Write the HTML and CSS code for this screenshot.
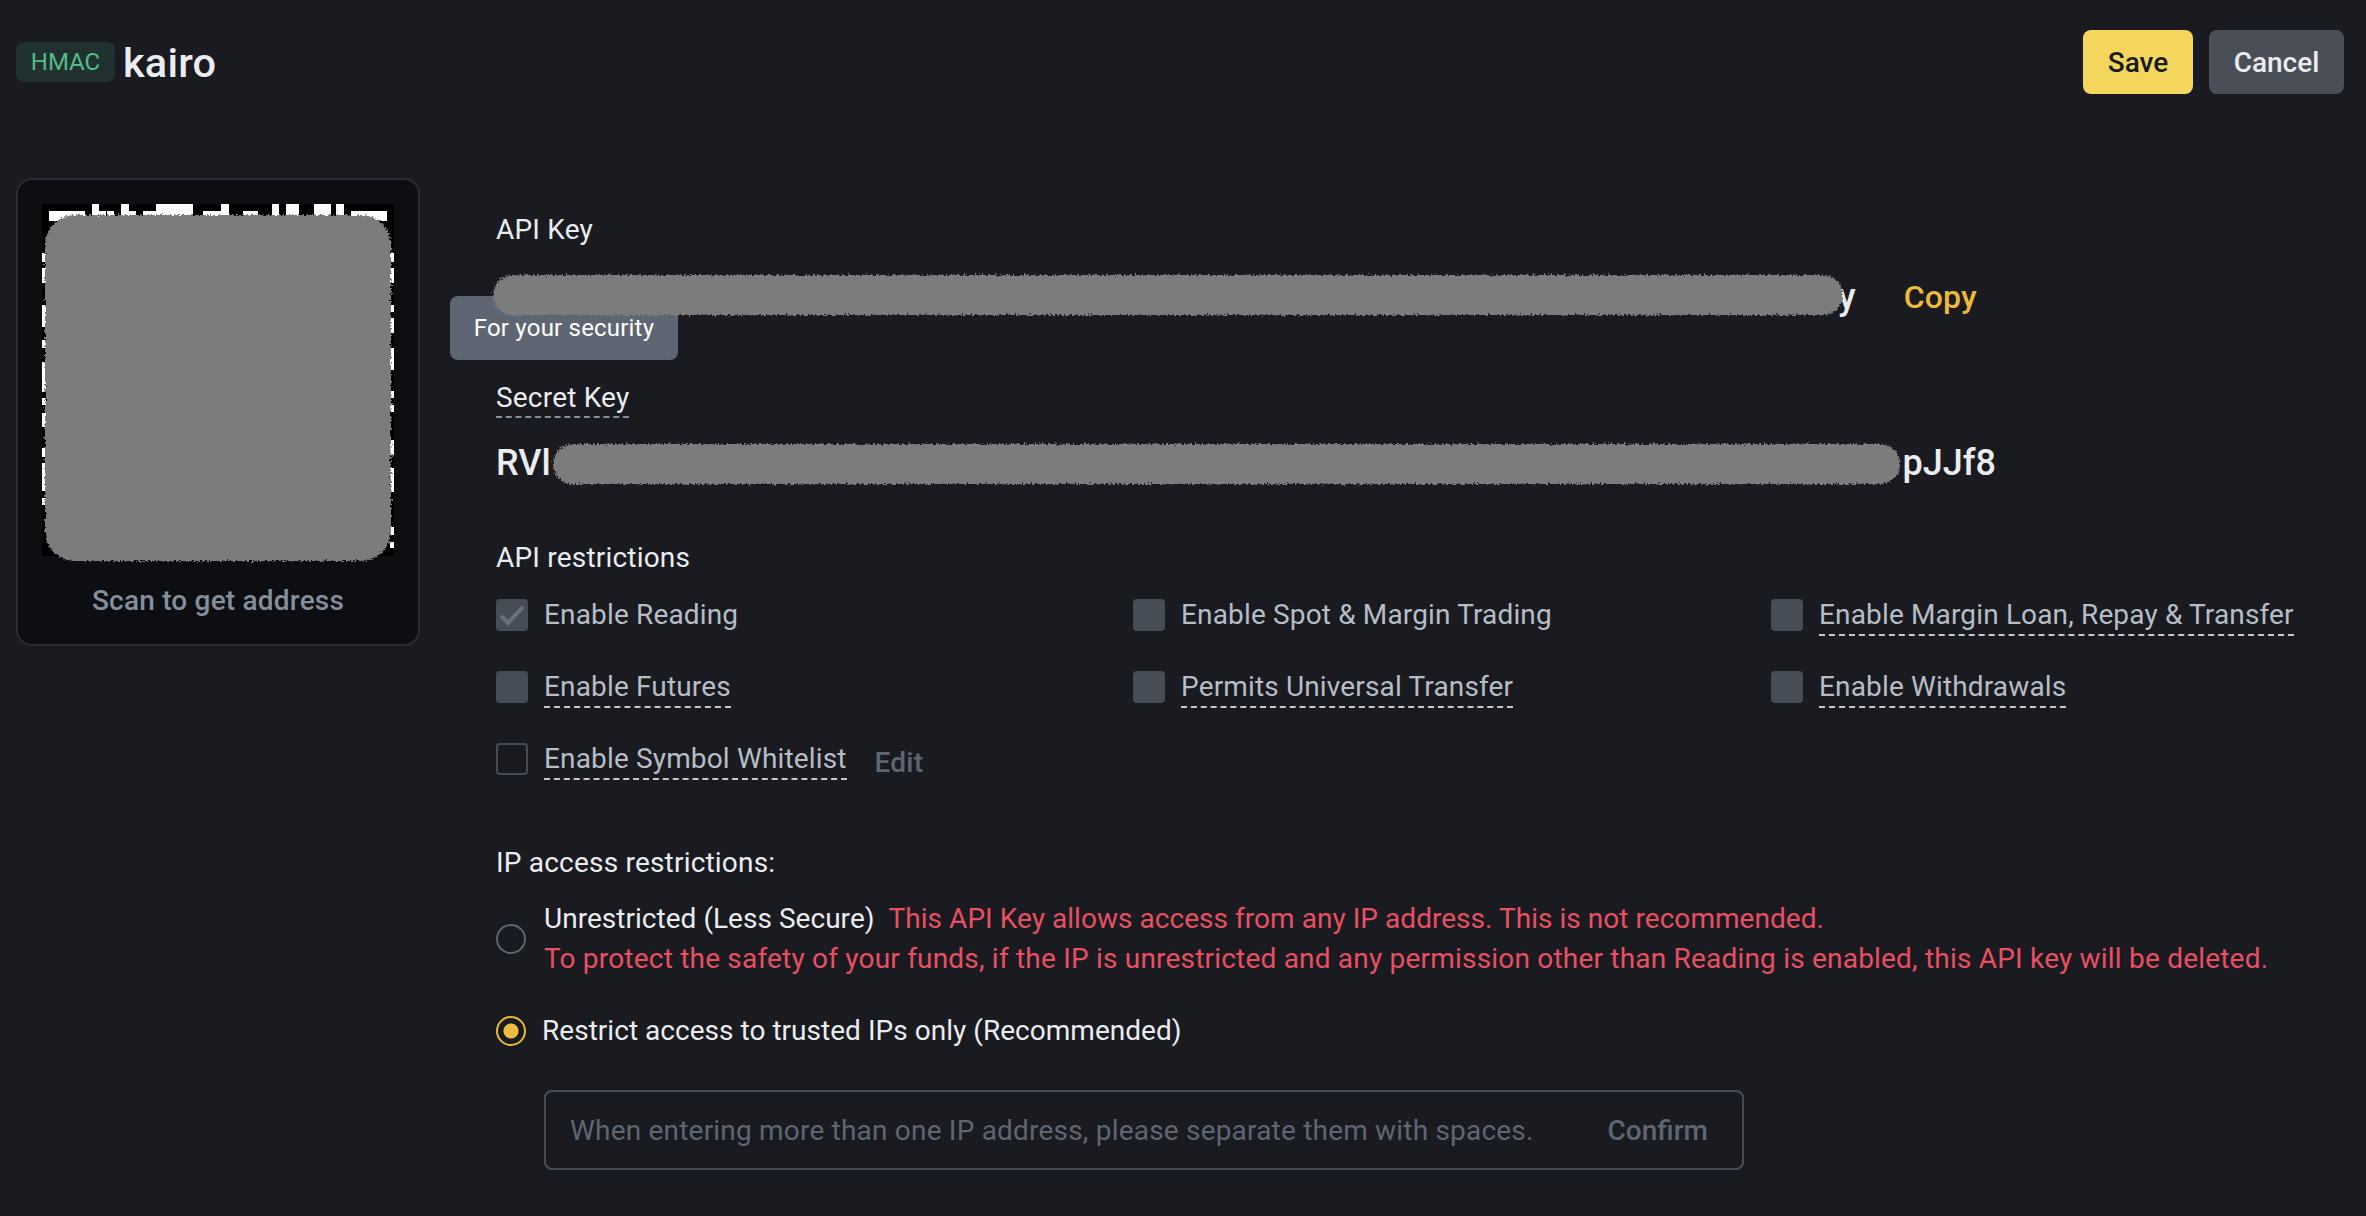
FILE: index.html
```html
<!DOCTYPE html>
<html lang="en">
<head>
<meta charset="utf-8">
<title>API Key</title>
<link rel="stylesheet" href="styles.css">
</head>
<body>
<svg class="defs" width="0" height="0" aria-hidden="true">
  <filter id="rough" x="-5%" y="-20%" width="110%" height="140%">
    <feTurbulence type="fractalNoise" baseFrequency="0.45" numOctaves="2" seed="4"/>
    <feDisplacementMap in="SourceGraphic" scale="6" xChannelSelector="R" yChannelSelector="G"/>
  </filter>
</svg>
<header class="top">
  <div class="title"><span class="badge">HMAC</span><span class="name">kairo</span></div>
  <div class="actions"><button class="btn save">Save</button><button class="btn cancel">Cancel</button></div>
</header>
<main class="main">
  <aside class="qr-card">
    <div class="qr-wrap">
      <svg class="qr" width="352" height="352" viewBox="0 0 352 352" shape-rendering="crispEdges">
        <rect width="352" height="352" fill="#000"/>
        <path fill="#fff" d="M7 7h36v10H7zM309 7h36v10h-36zM50 0h7v14h-7zM57 7h7v7h-7zM65 7h7v7h-7zM79 0h8v14h-8zM87 7h7v7h-7zM101 7h13v7h-13zM114 0h37v14h-37zM161 7h26v7h-26zM179 0h8v7h-8zM201 7h15v7h-15zM230 0h7v14h-7zM244 0h13v14h-13zM272 0h17v14h-17zM294 0h8v14h-8zM0 49h4v9H0zM0 64h4v15H0zM0 101h4v22H0zM0 136h4v8H0zM0 158h4v30H0zM0 194h4v7H0zM0 209h4v14H0zM0 244h4v9H0zM0 259h4v28H0zM0 294h4v7H0zM348 49h4v9h-4zM348 64h4v15h-4zM348 101h4v7h-4zM348 114h4v15h-4zM348 144h4v22h-4zM348 187h4v7h-4zM348 201h4v7h-4zM348 236h4v15h-4zM348 264h4v24h-4zM348 323h4v8h-4zM348 338h4v6h-4z"/>
      </svg>
      <div class="blob blob-qr"></div>
    </div>
    <p class="scan">Scan to get address</p>
  </aside>
  <section class="form">
    <div class="label first">API Key</div>
    <div class="key-row">
      <div class="value api-value">y</div>
      <a class="copy">Copy</a>
      <div class="tooltip">For your security</div>
      <div class="blob blob-api"></div>
    </div>
    <div class="label secret"><span class="dashed-light">Secret Key</span></div>
    <div class="secret-row">
      <div class="value secret-value"><span>RVl</span><span>pJJf8</span></div>
      <div class="blob blob-secret"></div>
    </div>
    <div class="label restrict">API restrictions</div>
    <div class="checks">
      <label class="check"><span class="box"><svg width="32" height="32" viewBox="0 0 32 32"><path d="M5 17l7 7L27 8" fill="none" stroke="#6b717b" stroke-width="4"/></svg></span><span class="check-text">Enable Reading</span></label>
      <label class="check"><span class="box"></span><span class="check-text">Enable Spot &amp; Margin Trading</span></label>
      <label class="check"><span class="box"></span><span class="check-text dashed">Enable Margin Loan, Repay &amp; Transfer</span></label>
      <label class="check"><span class="box"></span><span class="check-text dashed">Enable Futures</span></label>
      <label class="check"><span class="box"></span><span class="check-text dashed">Permits Universal Transfer</span></label>
      <label class="check"><span class="box"></span><span class="check-text dashed">Enable Withdrawals</span></label>
      <label class="check"><span class="box empty"></span><span class="check-text dashed">Enable Symbol Whitelist</span><span class="edit">Edit</span></label>
    </div>
    <div class="label ip">IP access restrictions:</div>
    <div class="radio-row unrestricted">
      <span class="radio"></span>
      <div class="radio-copy">
        <div><span class="radio-text">Unrestricted (Less Secure)</span><span class="warn warn-first">This API Key allows access from any IP address. This is not recommended.</span></div>
        <div class="warn warn-second">To protect the safety of your funds, if the IP is unrestricted and any permission other than Reading is enabled, this API key will be deleted.</div>
      </div>
    </div>
    <div class="radio-row restricted">
      <span class="radio active"></span>
      <span class="radio-text">Restrict access to trusted IPs only (Recommended)</span>
    </div>
    <div class="ip-input">
      <span class="placeholder">When entering more than one IP address, please separate them with spaces.</span>
      <span class="confirm">Confirm</span>
    </div>
  </section>
</main>
</body>
</html>
```
FILE: styles.css
```css
* { box-sizing: border-box; }
html, body { margin: 0; height: 100%; }
body {
  width: 2366px;
  height: 1216px;
  overflow: hidden;
  background: #191b20;
  color: #eaecef;
  font-family: "Roboto", "Liberation Sans", sans-serif;
  font-size: 28px;
  letter-spacing: 0.2px;
}
.defs { position: absolute; }
.top {
  display: flex;
  justify-content: space-between;
  align-items: center;
  height: 64px;
  margin-top: 30px;
  padding: 0 22px 0 16px;
}
.title { display: flex; align-items: center; gap: 8px; }
.badge {
  display: flex;
  align-items: center;
  justify-content: center;
  width: 99px;
  height: 40px;
  border-radius: 8px;
  background: #213130;
  color: #52bb87;
  font-size: 24px;
  letter-spacing: 0;
}
.name { font-size: 41.5px; font-weight: 500; color: #eaecef; }
.actions { display: flex; gap: 16px; }
.btn {
  height: 64px;
  border: 0;
  border-radius: 8px;
  font: 500 28px "Roboto", sans-serif;
}
.save { width: 110px; background: #f5d65c; color: #191b20; }
.cancel { width: 135px; background: #4a4e57; color: #eaecef; }
.main {
  display: flex;
  align-items: flex-start;
  margin-top: 84px;
  padding-left: 16px;
}
.qr-card {
  width: 404px;
  height: 468px;
  flex: none;
  padding: 24px;
  border: 2px solid #2a2d33;
  border-radius: 16px;
  background: #0c0e12;
}
.qr-wrap { position: relative; width: 352px; height: 352px; }
.qr { display: block; }
.blob { position: absolute; background: #7b7b7b; filter: url(#rough); }
.blob-qr { left: 3px; top: 11px; width: 346px; height: 346px; border-radius: 30px; }
.scan {
  margin: 28px 0 0;
  text-align: center;
  color: #848e9c;
  font-weight: 500;
}
.form { position: relative; margin-left: 76px; flex: 1; }
.label { line-height: 36px; color: #eaecef; }
.first { margin-top: 34px; }
.key-row {
  position: relative;
  display: flex;
  align-items: center;
  width: 1481px;
  height: 50px;
  margin-top: 24px;
}
.value { font-size: 36px; font-weight: 500; color: #eaecef; letter-spacing: 0; }
.api-value { width: 1360px; text-align: right; }
.copy { margin-left: 48px; color: #ecb93b; font-size: 32px; font-weight: 500; }
.blob-api { left: -3px; top: 3px; width: 1350px; height: 40px; border-radius: 20px; }
.tooltip {
  position: absolute;
  left: -46px;
  top: 24px;
  display: flex;
  align-items: center;
  justify-content: center;
  width: 228px;
  height: 64px;
  border-radius: 8px;
  background: #5e6673;
  color: #fff;
  font-size: 24px;
}
.secret { margin-top: 58px; }
.dashed-light { display: inline-block; line-height: 36px; border-bottom: 2px dashed #848e9c; }
.secret-row { position: relative; width: 1500px; margin-top: 20px; height: 50px; }
.secret-value { display: flex; justify-content: space-between; line-height: 50px; }
.blob-secret { left: 57px; top: 6px; width: 1347px; height: 40px; border-radius: 20px; }
.restrict { margin-top: 52px; }
.checks {
  display: grid;
  grid-template-columns: 637px 638px 1fr;
  grid-auto-rows: 72px;
  margin-top: 23px;
}
.check { display: flex; align-items: flex-start; color: #b7bdc6; }
.box {
  flex: none;
  width: 32px;
  height: 32px;
  margin-right: 16px;
  border-radius: 4px;
  background: #474d57;
}
.box svg { display: block; }
.box.empty { background: none; border: 2px solid #474d57; }
.check-text { line-height: 32px; padding-bottom: 3px; letter-spacing: 0.15px; }
.dashed { border-bottom: 2px dashed #c4c9d1; }
.edit { margin: 4px 0 0 28px; line-height: 32px; color: #5e6673; font-weight: 500; }
.ip { margin-top: 30px; }
.radio-row { display: flex; align-items: center; color: #eaecef; }
.radio-text { letter-spacing: 0.03px; }
.unrestricted { margin-top: 18px; }
.restricted { margin-top: 33px; }
.radio {
  flex: none;
  width: 30px;
  height: 30px;
  border: 2px solid #5e6673;
  border-radius: 50%;
}
.radio.active {
  border-color: #ecb93b;
  background: radial-gradient(circle, #ecbf42 0 7px, transparent 8px);
}
.radio-copy { margin-left: 18px; line-height: 39.5px; }
.restricted .radio-text { margin-left: 16px; line-height: 40px; }
.warn { color: #e94f62; }
.warn-first { margin-left: 14px; letter-spacing: 0.04px; }
.ip-input {
  display: flex;
  align-items: center;
  justify-content: space-between;
  width: 1200px;
  height: 80px;
  margin: 39px 0 0 48px;
  padding: 0 34px 0 24px;
  border: 2px solid #474d57;
  border-radius: 8px;
}
.placeholder { color: #5e6673; }
.confirm { color: #5e6673; font-weight: 500; letter-spacing: 0; }
```
